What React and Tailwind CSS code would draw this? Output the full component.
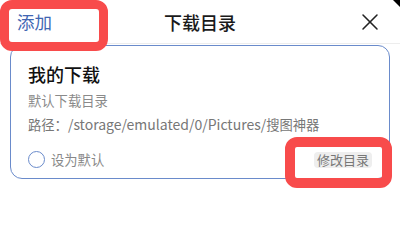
import { X } from 'lucide-react'

function App() {
  return (
    <div
      className="relative h-[240px] w-[400px] overflow-hidden bg-white"
      style={{ fontFamily: '"Noto Sans CJK SC", "Noto Sans", sans-serif' }}
    >
      <header className="grid h-[44px] grid-cols-[1fr_auto_1fr] items-center border-b border-[#ededed]">
        <div className="pl-[17px] text-[17.5px] leading-none text-[#4166b3]">添加</div>
        <div className="text-[18px] leading-none font-medium text-[#1a1a1a]">下载目录</div>
        <div className="flex justify-end pr-[16px]">
          <X className="h-[28px] w-[28px] text-[#222]" strokeWidth={1.3} />
        </div>
      </header>

      <div className="mx-[10px] mt-[1px] flex h-[134px] flex-col rounded-[12px] border border-[#6a8bcb] px-[17px] pt-[16px]">
        <div className="text-[18px] leading-[24px] font-medium text-[#111]">我的下载</div>
        <div className="mt-[5px] text-[13.3px] leading-[20px] text-[#8a8a8a]">默认下载目录</div>
        <div className="mt-[3px] text-[13.3px] leading-[20px] text-[#777]">
          路径：<span className="text-[14px]">/storage/emulated/0/Pictures/</span>搜图神器
        </div>
        <div className="mt-[16px] flex items-center justify-between">
          <div className="flex items-center gap-[6px]">
            <span className="h-[17px] w-[17px] rounded-full border-[1.5px] border-[#6a8bcb]" />
            <span className="text-[13.3px] leading-none text-[#888]">设为默认</span>
          </div>
          <span className="rounded-[4px] bg-[#eeeeee] px-[3px] py-[1px] text-[13px] leading-[14px] text-[#777]">
            修改目录
          </span>
        </div>
      </div>

      {/* annotation boxes */}
      <div className="absolute left-0 top-0 h-[51px] w-[108px] rounded-[12px] border-[9px] border-[#f84b4b]" />
      <div className="absolute left-[285px] top-[137px] h-[51px] w-[107px] rounded-[12px] border-[10px] border-[#f84b4b]" />
      <div className="absolute right-0 top-0 h-0 w-0 border-l-[7px] border-t-[7px] border-l-transparent border-t-black" />
    </div>
  )
}

export default App
